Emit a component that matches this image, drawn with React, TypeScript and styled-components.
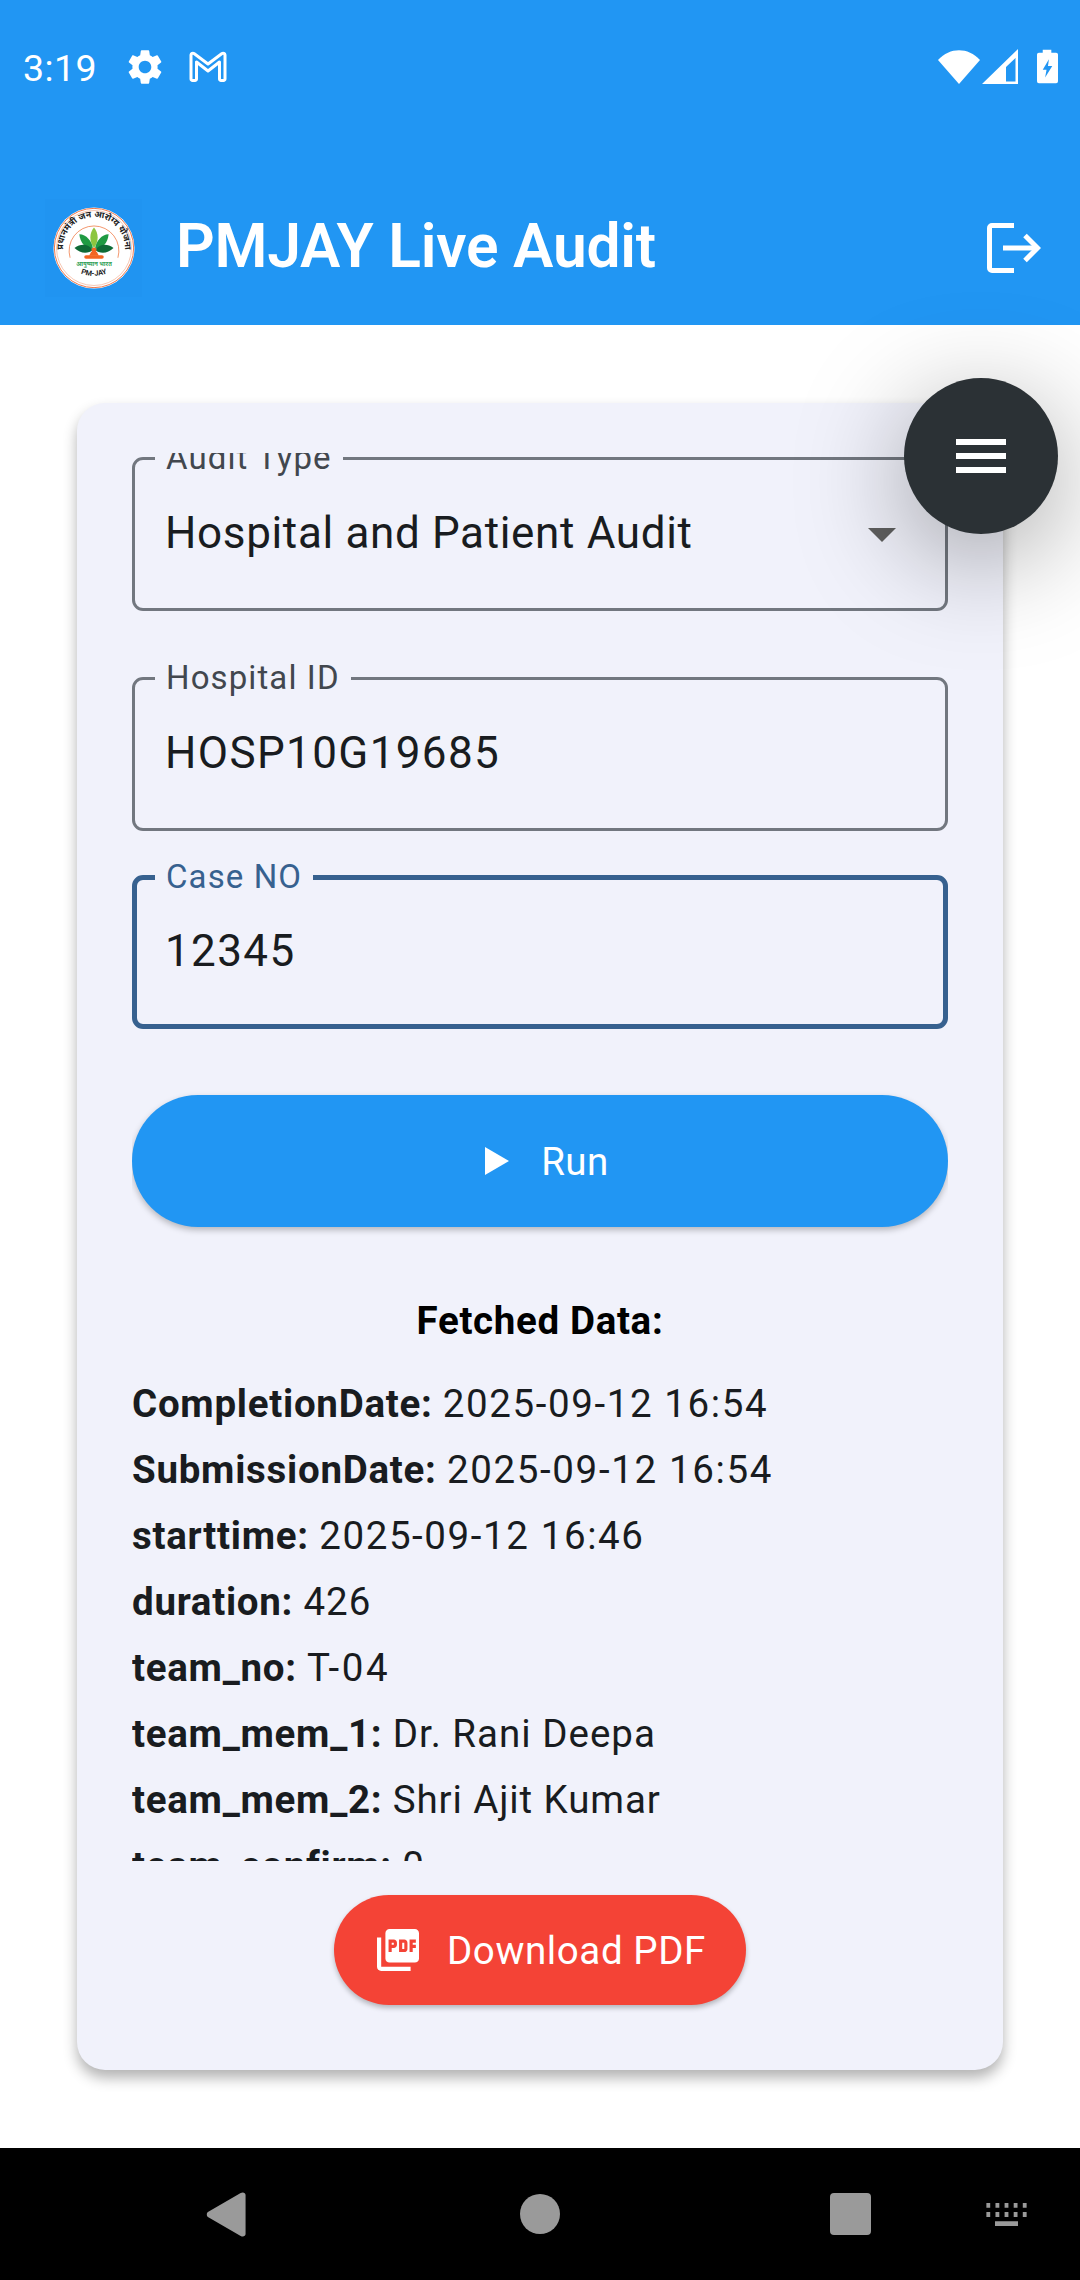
import React from "react";
import styled, { createGlobalStyle } from "styled-components";

const Global = createGlobalStyle`
  html, body { margin: 0; padding: 0; background: #fff; }
  body { font-family: Roboto, "Noto Sans", sans-serif; }
  * { box-sizing: border-box; }
`;

const Screen = styled.div`
  position: relative;
  width: 1080px;
  height: 2280px;
  display: flex;
  flex-direction: column;
  overflow: hidden;
  background: #fff;
`;

const Header = styled.header`
  height: 325px;
  flex: none;
  background: #2196f3;
  color: #fff;
  display: flex;
  flex-direction: column;
`;

const StatusBar = styled.div`
  height: 171px;
  flex: none;
  padding: 47px 0 0 23px;
  display: flex;
  align-items: flex-start;
`;

const Clock = styled.span`
  font-size: 37.5px;
  line-height: 42px;
  font-weight: 400;
  letter-spacing: 0.4px;
  width: 101px;
`;

const StatusLeftIcons = styled.div`
  display: flex;
  align-items: center;
  gap: 23px;
  height: 40px;
`;

const StatusRightIcons = styled.div`
  margin-left: auto;
  display: flex;
  align-items: center;
  height: 40px;
  padding-right: 22px;
`;

const AppBar = styled.div`
  flex: 1;
  display: flex;
  align-items: center;
  padding: 0 39px 0 45px;
`;

const LogoFrame = styled.div`
  width: 97px;
  height: 98px;
  flex: none;
  display: flex;
  align-items: center;
  justify-content: center;
  background: rgba(30, 140, 235, 0.15);
`;

const Title = styled.h1`
  margin: 0 0 3px 34px;
  font-size: 60.5px;
  line-height: 72px;
  font-weight: 600;
  letter-spacing: -0.24px;
  color: #fff;
`;

const IconButton = styled.div`
  margin-left: auto;
  display: flex;
  align-items: center;
`;

const Content = styled.main`
  flex: 1;
  padding: 78px 77px;
  display: flex;
  flex-direction: column;
`;

const Card = styled.section`
  flex: 1;
  background: #f1f2fb;
  border-radius: 28px;
  box-shadow: 0 8px 14px rgba(0, 0, 0, 0.3);
  padding: 50px 55px 65px;
  display: flex;
  flex-direction: column;
  min-height: 0;
`;

const Scroll = styled.div`
  height: 1408px;
  flex: none;
  overflow: hidden;
  padding-top: 4px;
`;

const Field = styled.div<{ $gap: number }>`
  position: relative;
  height: 154px;
  margin-bottom: ${(p) => p.$gap}px;
`;

const Outline = styled.div<{ $focused?: boolean }>`
  position: absolute;
  inset: 0;
  border: ${(p) => (p.$focused ? "5px solid #37618f" : "3px solid #72777f")};
  border-radius: 11px;
`;

const FloatingLabel = styled.span<{ $focused?: boolean }>`
  position: absolute;
  left: 23px;
  top: ${(p) => (p.$focused ? -18 : -19)}px;
  padding: 0 11px;
  background: #f1f2fb;
  font-size: 33px;
  line-height: 40px;
  letter-spacing: 1.1px;
  color: ${(p) => (p.$focused ? "#37618f" : "#42474e")};
`;

const Value = styled.div<{ $spacing: number }>`
  position: absolute;
  left: 33px;
  top: 47px;
  font-size: 44px;
  line-height: 58px;
  letter-spacing: ${(p) => p.$spacing}px;
  color: #191c20;
`;

const Caret = styled.div`
  position: absolute;
  right: 52px;
  top: 71px;
  width: 0;
  height: 0;
  border-left: 14px solid transparent;
  border-right: 14px solid transparent;
  border-top: 14px solid #5f5f5f;
`;

const RunButton = styled.div`
  height: 132px;
  margin-top: 66px;
  padding-left: 14px;
  border-radius: 66px;
  background: #2196f3;
  color: #fff;
  display: flex;
  align-items: center;
  justify-content: center;
  gap: 32px;
  font-size: 38.5px;
  letter-spacing: 0.5px;
  font-weight: 400;
  box-shadow: 0 3px 6px rgba(0, 0, 0, 0.25);
`;

const DataHeading = styled.h2`
  margin: 69px 0 25px;
  text-align: center;
  font-size: 38.5px;
  line-height: 50px;
  font-weight: 700;
  letter-spacing: 0.65px;
  color: #000;
`;

const DataRow = styled.div`
  font-size: 38.5px;
  line-height: 66px;
  letter-spacing: 0.72px;
  color: #191c20;
  white-space: nowrap;
`;

const DataKey = styled.b`
  font-weight: 700;
`;

const DataValue = styled.span<{ $spacing: number }>`
  letter-spacing: ${(p) => p.$spacing}px;
`;

const PdfRow = styled.div`
  margin-top: 34px;
  display: flex;
  justify-content: center;
`;

const PdfButton = styled.div`
  width: 412px;
  height: 110px;
  border-radius: 55px;
  background: #f44336;
  color: #fff;
  display: flex;
  align-items: center;
  justify-content: center;
  gap: 28px;
  padding-left: 3px;
  font-size: 38.5px;
  letter-spacing: 0.6px;
  box-shadow: 0 3px 5px rgba(0, 0, 0, 0.25);
`;

const NavBar = styled.nav`
  height: 132px;
  flex: none;
  background: #000;
  display: flex;
  align-items: center;
  padding-left: 206px;
`;

const NavItem = styled.div<{ $offset: number }>`
  margin-left: ${(p) => p.$offset}px;
  display: flex;
`;

const Fab = styled.div`
  position: absolute;
  left: 904px;
  top: 378px;
  width: 154px;
  height: 156px;
  border-radius: 50%;
  background: #2b3135;
  display: flex;
  align-items: center;
  justify-content: center;
  box-shadow: 0 25px 110px rgba(0, 0, 0, 0.36);
`;

const rows: [string, string, number][] = [
  ["CompletionDate:", "2025-09-12 16:54", 1.6],
  ["SubmissionDate:", "2025-09-12 16:54", 1.65],
  ["starttime:", "2025-09-12 16:46", 1.6],
  ["duration:", "426", 1.0],
  ["team_no:", "T-04", 2.7],
  ["team_mem_1:", "Dr. Rani Deepa", 1.0],
  ["team_mem_2:", "Shri Ajit Kumar", 0.9],
  ["team_confirm:", "0", 1.0],
];

const Logo = () => (
  <svg width="82" height="82" viewBox="0 0 84 84">
    <circle cx="42" cy="42" r="41.5" fill="#fff" />
    <circle cx="42" cy="42" r="40.6" fill="none" stroke="#f0764a" strokeWidth="1" />
    <circle cx="42" cy="42" r="38.4" fill="none" stroke="#f0a080" strokeWidth="0.6" />
    <path id="schemeArc" d="M12 52 A31.6 31.6 0 1 1 72 52" fill="none" />
    <text fontFamily="'Noto Sans', Roboto, sans-serif" fontSize="9" fontWeight="700" fill="#222" textAnchor="middle">
      <textPath href="#schemeArc" startOffset="50%">प्रधानमंत्री जन आरोग्य योजना</textPath>
    </text>
    <path d="M17.5 52 A25.5 25.5 0 1 1 66.5 52" fill="none" stroke="#ef7a45" strokeWidth="0.8" />
    <path d="M42 21 C47 27 47 35 42 42 C37 35 37 27 42 21 Z" fill="#8cc63f" />
    <path d="M27 28 C34 28 40 35 41 43 C33 43 28 37 27 28 Z" fill="#1f9a42" />
    <path d="M57 28 C50 28 44 35 43 43 C51 43 56 37 57 28 Z" fill="#1f9a42" />
    <path d="M22 42 C29 37 36 38 41 44 C36 48 28 48 22 42 Z" fill="#0f6a36" />
    <path d="M62 42 C55 37 48 38 43 44 C48 48 56 48 62 42 Z" fill="#0f6a36" />
    <circle cx="42" cy="44" r="2.6" fill="#f26522" />
    <path d="M39 46 H45 L47 50 H37 Z" fill="#f26522" />
    <rect x="32" y="49.5" width="20" height="3.6" rx="1.8" fill="#f26522" />
    <text x="42" y="60.5" textAnchor="middle" fontFamily="'Noto Sans', Roboto, sans-serif" fontWeight="700" fontSize="6" fill="#2e9e55">आयुष्मान भारत</text>
    <path id="pmjayArc" d="M22 65 Q42 76 62 65" fill="none" />
    <text fontFamily="Roboto, sans-serif" fontWeight="700" fontSize="7.5" fill="#222" textAnchor="middle">
      <textPath href="#pmjayArc" startOffset="50%">PM-JAY</textPath>
    </text>
  </svg>
);

export default function App() {
  return (
    <Screen>
      <Global />
      <Header>
        <StatusBar>
          <Clock>3:19</Clock>
          <StatusLeftIcons>
            <svg width="42" height="42" viewBox="0 0 24 24" fill="#fff">
              <path d="M19.14 12.94c.04-.3.06-.61.06-.94 0-.32-.02-.64-.07-.94l2.03-1.58a.49.49 0 0 0 .12-.61l-1.92-3.32a.488.488 0 0 0-.59-.22l-2.39.96c-.5-.38-1.03-.7-1.62-.94l-.36-2.54a.484.484 0 0 0-.48-.41h-3.84c-.24 0-.43.17-.47.41l-.36 2.54c-.59.24-1.13.57-1.62.94l-2.39-.96c-.22-.08-.47 0-.59.22L2.74 8.87c-.12.21-.08.47.12.61l2.03 1.58c-.05.3-.09.63-.09.94s.02.64.07.94l-2.03 1.58a.49.49 0 0 0-.12.61l1.92 3.32c.12.22.37.29.59.22l2.39-.96c.5.38 1.03.7 1.62.94l.36 2.54c.05.24.24.41.48.41h3.84c.24 0 .44-.17.47-.41l.36-2.54c.59-.24 1.13-.56 1.62-.94l2.39.96c.22.08.47 0 .59-.22l1.92-3.32c.12-.22.07-.47-.12-.61l-2.01-1.58zM12 15.6c-1.98 0-3.6-1.62-3.6-3.6s1.62-3.6 3.6-3.6 3.6 1.62 3.6 3.6-1.62 3.6-3.6 3.6z" />
            </svg>
            <svg width="38" height="32" viewBox="0 0 38 32" fill="none" stroke="#fff" strokeWidth="3" strokeLinejoin="round">
              <path d="M2 4 a2 2 0 0 1 3-1.5 L19 13 L33 2.5 a2 2 0 0 1 3 1.5 V28 a1.5 1.5 0 0 1-1.5 1.5 H32 a1.5 1.5 0 0 1-1.5-1.5 V11 L19 20 L7.5 11 V28 a1.5 1.5 0 0 1-1.5 1.5 H3.5 A1.5 1.5 0 0 1 2 28 Z" />
            </svg>
          </StatusLeftIcons>
          <StatusRightIcons>
            <svg width="42" height="36" viewBox="0 0 42 36" fill="#fff">
              <path d="M0 11 C12 -2 30 -2 42 11 L21 35 Z" />
            </svg>
            <svg width="36" height="36" viewBox="0 0 36 36" style={{ marginLeft: 2 }} fill="#fff">
              <path d="M36 0 V35 H0 Z M33.5 9 L24 18 V32.5 H33.5 Z" fillRule="evenodd" />
            </svg>
            <svg width="21" height="36" viewBox="0 0 22 36" style={{ marginLeft: 19 }} fill="#fff">
              <path fillRule="evenodd" d="M6 0 H15 V3 H20 A2 2 0 0 1 22 5 V33 A2 2 0 0 1 20 35 H2 A2 2 0 0 1 0 33 V5 A2 2 0 0 1 2 3 H6 Z M12.5 10 L6 21 H10 L8.5 29 L16 17 H11.5 Z" />
            </svg>
          </StatusRightIcons>
        </StatusBar>
        <AppBar>
          <LogoFrame>
            <Logo />
          </LogoFrame>
          <Title>PMJAY Live Audit</Title>
          <IconButton>
            <svg width="54" height="50" viewBox="0 0 54 50" fill="none" stroke="#fff" strokeWidth="5">
              <path d="M27 2.5 H5 A2.5 2.5 0 0 0 2.5 5 V45 A2.5 2.5 0 0 0 5 47.5 H27" />
              <path d="M16 25 H50" />
              <path d="M38 12.5 L50.5 25 L38 37.5" />
            </svg>
          </IconButton>
        </AppBar>
      </Header>
      <Content>
        <Card>
          <Scroll>
            <Field $gap={66}>
              <Outline />
              <FloatingLabel>Audit Type</FloatingLabel>
              <Value $spacing={0.65}>Hospital and Patient Audit</Value>
              <Caret />
            </Field>
            <Field $gap={44}>
              <Outline />
              <FloatingLabel>Hospital ID</FloatingLabel>
              <Value $spacing={1.38}>HOSP10G19685</Value>
            </Field>
            <Field $gap={0}>
              <Outline $focused />
              <FloatingLabel $focused>Case NO</FloatingLabel>
              <Value $spacing={1.38}>12345</Value>
            </Field>
            <RunButton>
              <svg width="24" height="28" viewBox="0 0 24 28" fill="#fff">
                <path d="M0 0 L24 14 L0 28 Z" />
              </svg>
              Run
            </RunButton>
            <DataHeading>Fetched Data:</DataHeading>
            {rows.map(([k, v, s]) => (
              <DataRow key={k}>
                <DataKey>{k}</DataKey> <DataValue $spacing={s}>{v}</DataValue>
              </DataRow>
            ))}
          </Scroll>
          <PdfRow>
            <PdfButton>
              <svg width="42" height="42" viewBox="2 2 20 20" fill="#fff">
                <path d="M20 2H8c-1.1 0-2 .9-2 2v12c0 1.1.9 2 2 2h12c1.1 0 2-.9 2-2V4c0-1.1-.9-2-2-2zm-8.5 7.5c0 .83-.67 1.5-1.5 1.5H9v2H7.5V7H10c.83 0 1.5.67 1.5 1.5v1zm5 2c0 .83-.67 1.5-1.5 1.5h-2.5V7H15c.83 0 1.5.67 1.5 1.5v3zm4-3H19v1h1.5V11H19v2h-1.5V7h3v1.5zM9 9.5h1v-1H9v1zM4 6H2v14c0 1.1.9 2 2 2h14v-2H4V6zm10 5.5h1v-3h-1v3z" />
              </svg>
              Download PDF
            </PdfButton>
          </PdfRow>
        </Card>
      </Content>
      <NavBar>
        <NavItem $offset={0}>
          <svg width="40" height="45" viewBox="0 0 40 46" fill="#9a9a9a">
            <path d="M35 1 C37.5 -0.5 40 1 40 3 V43 C40 45 37.5 46.5 35 45 L1.5 25.5 C0 24.5 0 21.5 1.5 20.5 Z" />
          </svg>
        </NavItem>
        <NavItem $offset={274}>
          <svg width="40" height="40" viewBox="0 0 40 40">
            <circle cx="20" cy="20" r="20" fill="#9a9a9a" />
          </svg>
        </NavItem>
        <NavItem $offset={270}>
          <svg width="41" height="42" viewBox="0 0 41 42">
            <rect width="41" height="42" rx="4" fill="#9a9a9a" />
          </svg>
        </NavItem>
        <NavItem $offset={115}>
          <svg width="41" height="23" viewBox="0 0 42 24" fill="#9a9a9a">
            <path d="M0 0h4v5H0zM9.5 0h4v5h-4zM19 0h4v5h-4zM28.5 0h4v5h-4zM38 0h4v5h-4zM0 9.5h4v5H0zM9.5 9.5h4v5h-4zM19 9.5h4v5h-4zM28.5 9.5h4v5h-4zM38 9.5h4v5h-4zM9 19h24v5H9z" />
          </svg>
        </NavItem>
      </NavBar>
      <Fab>
        <svg width="50" height="34" viewBox="0 0 50 34" fill="#fff">
          <path d="M0 0h50v6H0z" />
          <path d="M0 14h50v6H0z" />
          <path d="M0 28h50v6H0z" />
        </svg>
      </Fab>
    </Screen>
  );
}
